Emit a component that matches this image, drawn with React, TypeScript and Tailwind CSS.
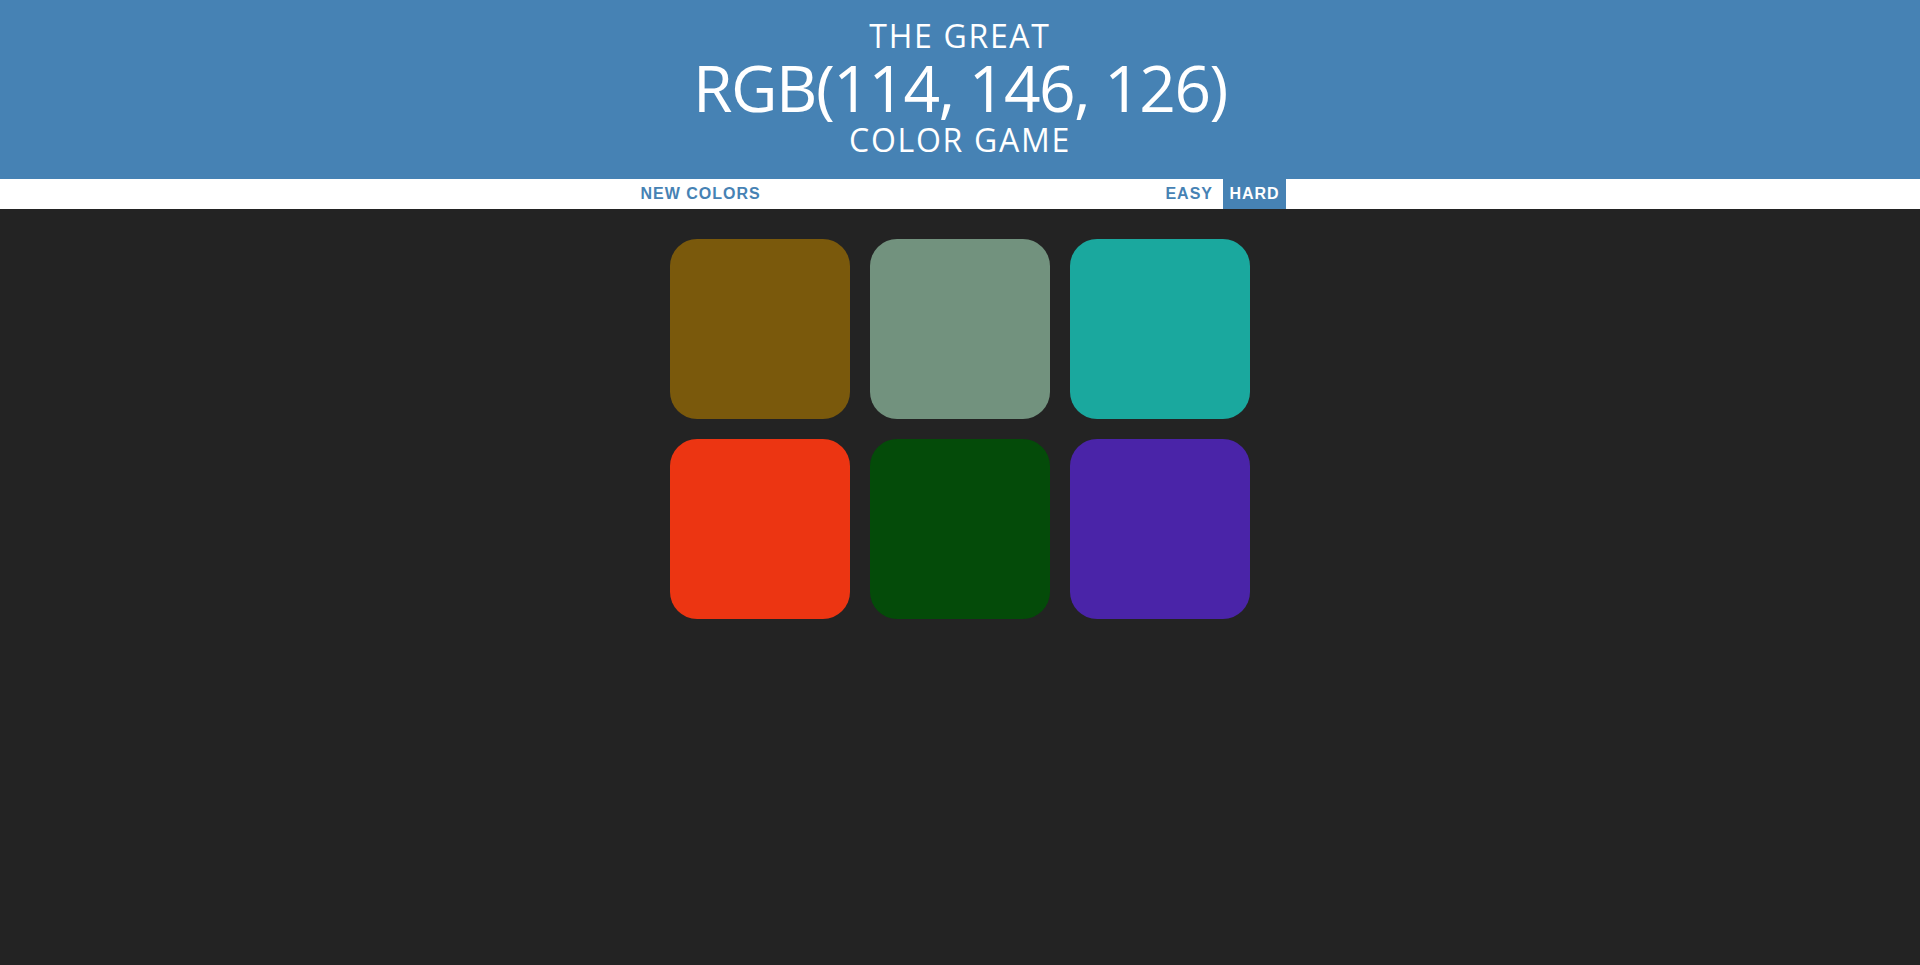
const squares = ["#7a590c", "#72927e", "#1aa89e", "#ec3512", "#044b09", "#4a24a8"];

export default function App() {
  return (
    <div className="min-h-[965px] bg-[#232323]">
      <h1 className="bg-[#4682b4] pt-[19px] pb-[22px] text-center font-normal uppercase text-white font-['Open_Sans',sans-serif]">
        <div className="text-[32px] leading-[34px] tracking-[1.7px]">The Great</div>
        <div className="text-[64px] leading-[70px] tracking-[-1.5px]">RGB(114, 146, 126)</div>
        <div className="text-[32px] leading-[34px] tracking-[1.7px]">Color Game</div>
      </h1>
      <div className="flex h-[30px] items-stretch justify-center gap-[4.4px] bg-white font-['Liberation_Sans',Arial,sans-serif] text-base font-bold uppercase tracking-[1px]">
        <button className="px-1.5 uppercase text-[#4682b4]">New Colors</button>
        <span className="w-[384px]"></span>
        <button className="px-1.5 uppercase text-[#4682b4]">Easy</button>
        <button className="bg-[#4682b4] px-1.5 uppercase text-white">Hard</button>
      </div>
      <div className="mx-auto mt-[30px] grid w-[580px] grid-cols-3 gap-5">
        {squares.map((c) => (
          <div key={c} className="h-[180px] w-[180px] rounded-[27px]" style={{ backgroundColor: c }} />
        ))}
      </div>
    </div>
  );
}
